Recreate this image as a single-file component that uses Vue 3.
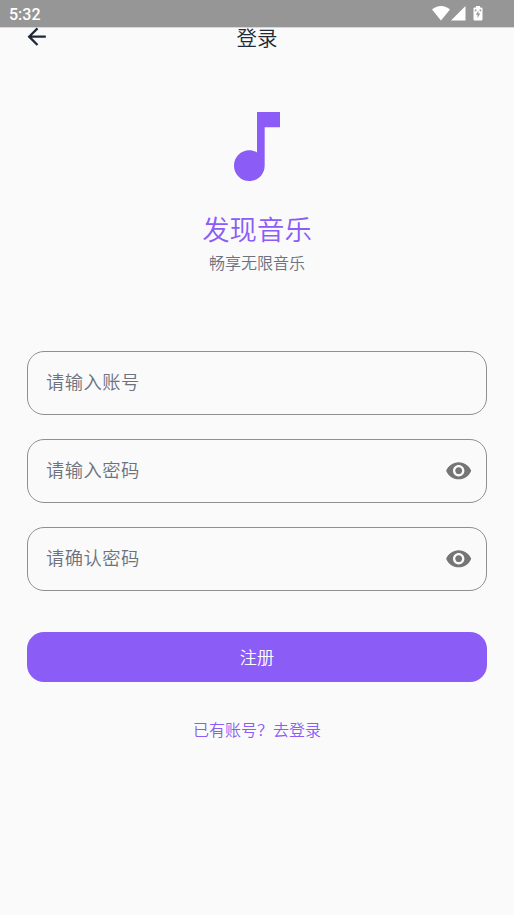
<script setup>
import { ref } from 'vue'

const fields = ref([
  { id: 'account', label: '请输入账号', secret: false },
  { id: 'password', label: '请输入密码', secret: true },
  { id: 'confirm', label: '请确认密码', secret: true },
])
</script>

<template>
  <div class="screen">
    <div class="status">
      <span class="time">5:32</span>
      <div class="indicators">
        <svg class="wifi" viewBox="0 0 18 15"><path d="M0 3.6C5-1.2 13-1.2 18 3.6L9 14.6Z" /></svg>
        <svg class="signal" viewBox="0 0 15 15"><path d="M14.5 0V14.5H0Z" /></svg>
        <svg class="battery" viewBox="0 0 10 15">
          <path d="M3 0H7V1.5H8.5Q9.5 1.5 9.5 2.5V13.5Q9.5 14.5 8.5 14.5H1.5Q.5 14.5 .5 13.5V2.5Q.5 1.5 1.5 1.5H3Z" />
          <path class="bolt" d="M5.4 4.8V7.4H7.2L4.6 12V8.8H2.9ZM1.8 3.6h1.6v1.6H1.8ZM6.6 3.6h1.6v1.6H6.6Z" />
        </svg>
      </div>
    </div>

    <header class="bar">
      <button class="back" aria-label="返回">
        <svg viewBox="0 0 24 24"><path d="M20 11H7.83l5.59-5.59L12 4l-8 8 8 8 1.41-1.41L7.83 13H20v-2z" /></svg>
      </button>
      <h1>登录</h1>
    </header>

    <section class="brand">
      <svg class="note" viewBox="0 0.13 24 24">
        <path d="M12 3v10.55c-.59-.34-1.27-.55-2-.55-2.21 0-4 1.79-4 4s1.79 4 4 4 4-1.79 4-4V7h4V3h-6z" />
      </svg>
      <h2>发现音乐</h2>
      <p>畅享无限音乐</p>
    </section>

    <form class="form" @submit.prevent>
      <div v-for="field in fields" :key="field.id" class="field">
        <span class="label">{{ field.label }}</span>
        <svg v-if="field.secret" class="eye" viewBox="0 0 24 24">
          <path d="M12 4.5C7 4.5 2.73 7.61 1 12c1.73 4.39 6 7.5 11 7.5s9.27-3.11 11-7.5c-1.73-4.39-6-7.5-11-7.5zM12 17c-2.76 0-5-2.24-5-5s2.24-5 5-5 5 2.24 5 5-2.24 5-5 5zm0-8c-1.66 0-3 1.34-3 3s1.34 3 3 3 3-1.34 3-3-1.34-3-3-3z" />
        </svg>
      </div>
      <button class="submit" type="submit">注册</button>
    </form>

    <a class="switch">已有账号？去登录</a>
  </div>
</template>

<style>
body {
  background: #fafafa;
}
</style>

<style scoped>
.screen {
  display: flex;
  flex-direction: column;
  box-sizing: border-box;
  height: 915px;
  background: #fafafa;
  font-family: "Noto Sans CJK SC", sans-serif;
  font-weight: 350;
}
svg {
  display: block;
  fill: currentColor;
}
button {
  border: 0;
  padding: 0;
  font-family: inherit;
  font-weight: inherit;
}
h1,
h2,
p {
  margin: 0;
  font-weight: inherit;
}
.status {
  display: flex;
  flex: none;
  justify-content: space-between;
  box-sizing: border-box;
  height: 27px;
  padding: 0 31px 0 9px;
  background: #969696;
  box-shadow: 0 1px 0 #d8d8d8;
  color: #fff;
}
.time {
  padding-top: 1px;
  font: 500 16px/27px Roboto, sans-serif;
}
.indicators {
  display: flex;
  padding-top: 6px;
}
.wifi {
  width: 18px;
  height: 15px;
}
.signal {
  width: 15px;
  height: 15px;
  margin-left: 1px;
}
.battery {
  width: 10px;
  height: 15px;
  margin-left: 7px;
}
.bolt {
  fill: #969696;
}
.bar {
  display: grid;
  flex: none;
  grid-template-columns: 28px 1fr 28px;
  grid-template-rows: 20px;
  align-items: center;
  height: 20px;
  margin-top: 3px;
  padding: 0 23px;
  color: #1f2937;
}
.back {
  height: 28px;
  margin: -7px 0 -1px;
  background: none;
  color: inherit;
}
.back svg {
  width: 27.4px;
  height: 27.4px;
}
h1 {
  margin-top: -7px;
  text-align: center;
  font-size: 20.5px;
  line-height: 20px;
}
.brand {
  display: flex;
  flex-direction: column;
  align-items: center;
  padding-top: 51px;
}
.note {
  width: 92px;
  height: 92px;
  color: #8b5cf6;
}
h2 {
  margin-top: 15px;
  color: #8b5cf6;
  font-size: 27.4px;
  line-height: 40px;
}
p {
  margin-top: 2px;
  color: #6b7280;
  font-size: 16px;
  line-height: 24px;
}
.form {
  display: flex;
  flex-direction: column;
  gap: 24px;
  padding: 77px 27px 0;
}
.field {
  display: flex;
  align-items: center;
  justify-content: space-between;
  box-sizing: border-box;
  height: 64px;
  padding: 0 14px 0 18px;
  border: 1px solid #8f8f8f;
  border-radius: 17px;
}
.label {
  padding-bottom: 4px;
  color: #6b7280;
  font-size: 18.3px;
  letter-spacing: 0.5px;
  line-height: 28px;
}
.eye {
  width: 27.4px;
  height: 27.4px;
  color: #757575;
}
.submit {
  height: 50px;
  margin-top: 17px;
  border-radius: 17px;
  background: #8b5cf6;
  color: #fff;
  font-size: 17.2px;
  line-height: 50px;
}
.switch {
  margin-top: 35px;
  color: #8b5cf6;
  text-align: center;
  font-size: 16px;
  line-height: 24px;
}
</style>
